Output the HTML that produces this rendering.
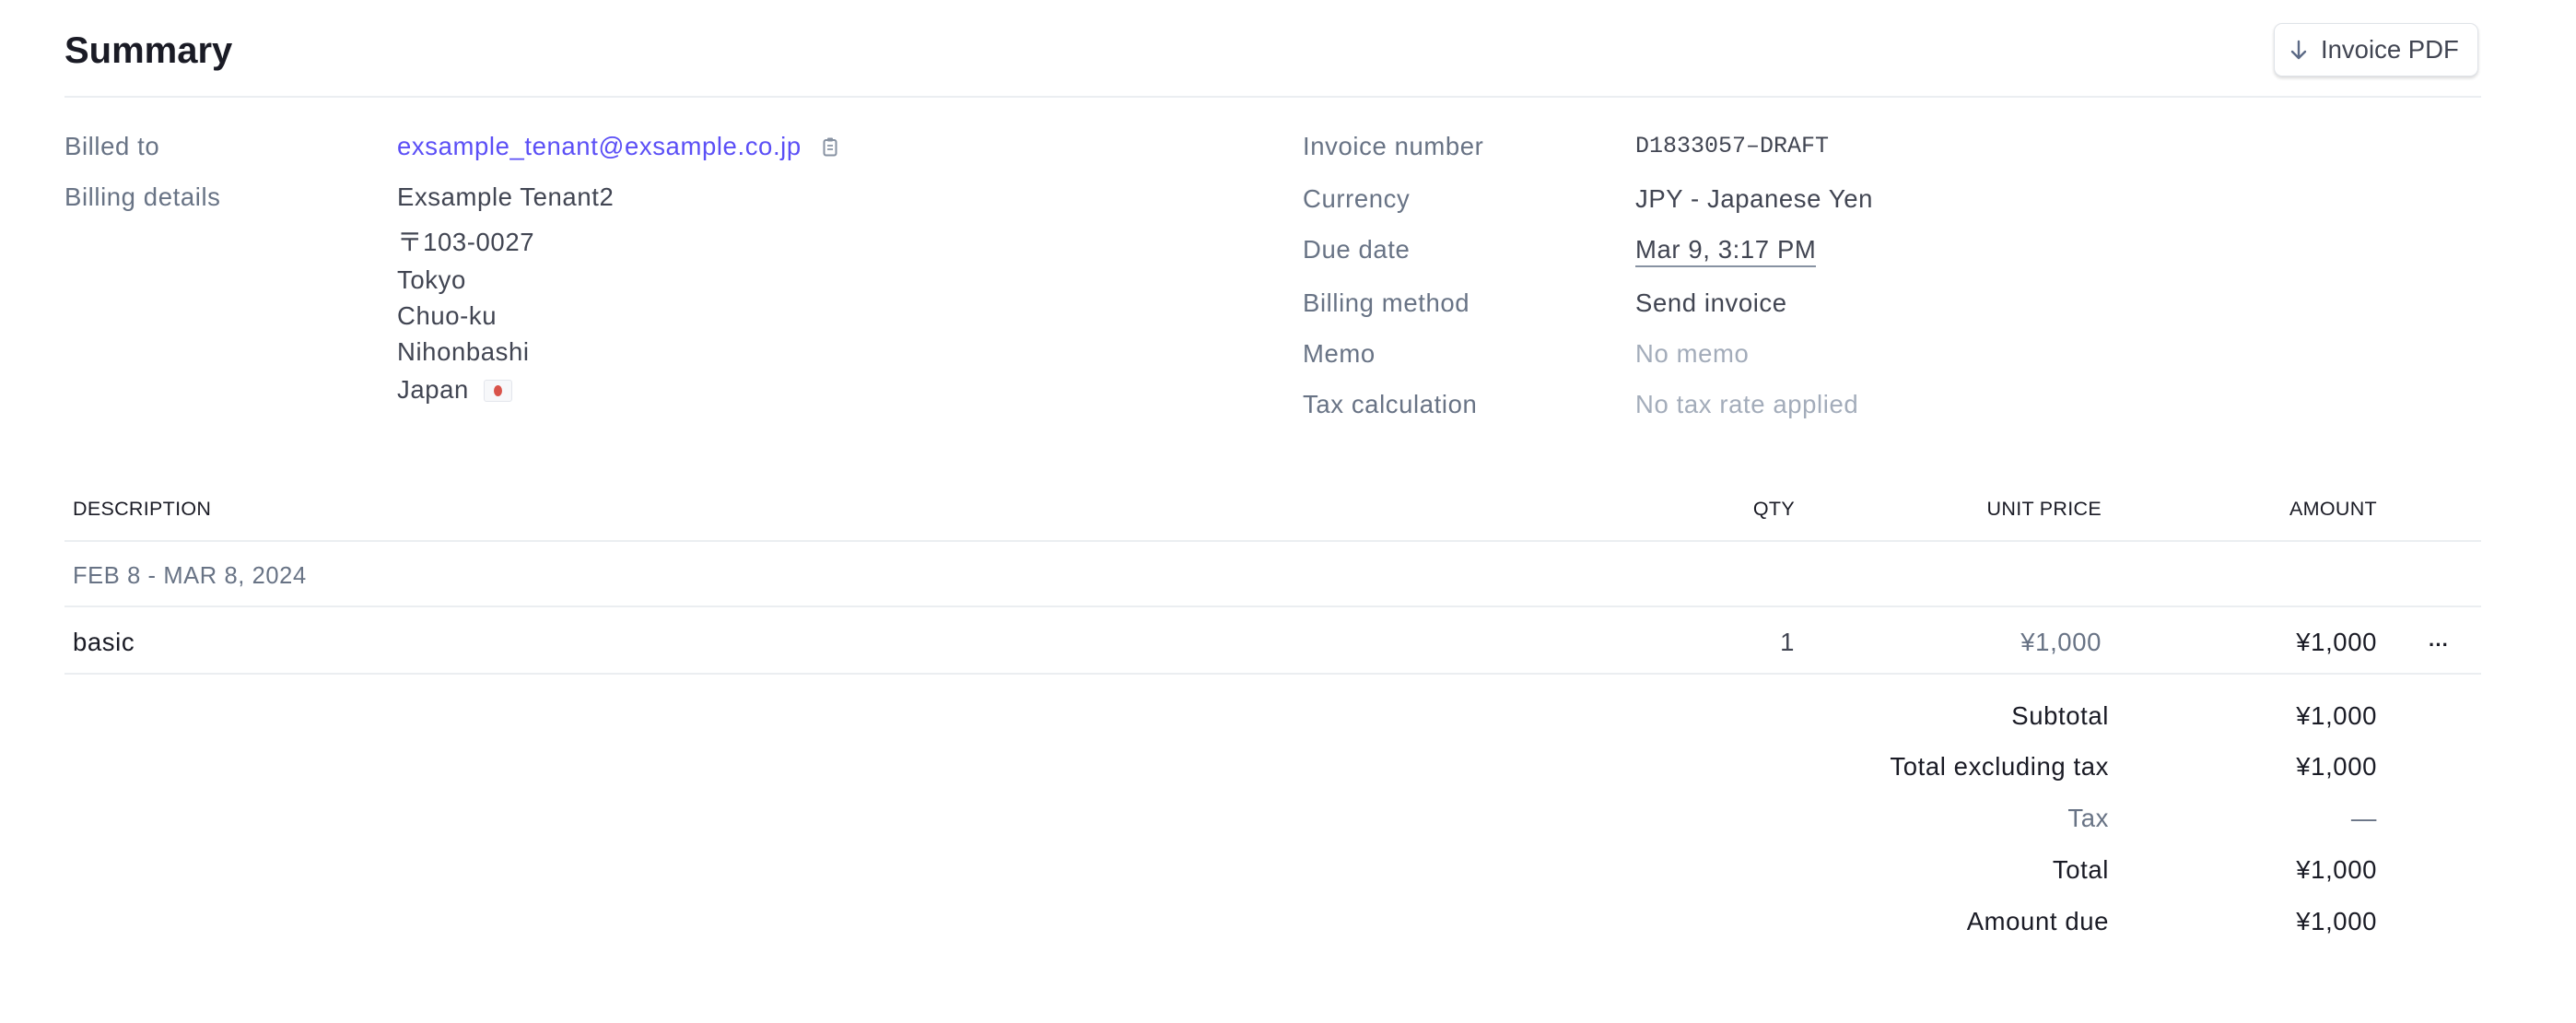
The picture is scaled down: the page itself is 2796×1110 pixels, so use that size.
<!DOCTYPE html>
<html><head><meta charset="utf-8"><style>
html,body{margin:0;padding:0;background:#fff;}
body{width:2796px;height:1110px;position:relative;overflow:hidden;font-family:"Liberation Sans","Noto Sans CJK JP",sans-serif;font-size:27.5px;letter-spacing:0.6px;color:#414552;}
.t{position:absolute;height:40px;line-height:40px;white-space:nowrap;}
.r{text-align:right;}
.lbl{color:#687385;}
.mut{color:#a3acba;}
.dk{color:#1a1b25;}
.hr{position:absolute;left:70px;width:2623px;height:2px;background:#ebeef1;}
.th{font-size:21.5px;color:#1a1b25;letter-spacing:0.3px;}
</style></head><body>
<div class="t dk" style="left:70px;top:35px;font-size:40px;font-weight:bold;letter-spacing:0;">Summary</div>
<div style="position:absolute;left:2468px;top:25px;width:220px;height:56px;border:1px solid #dfe3e8;border-radius:9px;box-shadow:0 2px 3px rgba(0,0,0,0.15);background:#fff;"></div>
<svg style="position:absolute;left:2484px;top:42px" width="22" height="24" viewBox="0 0 22 24"><path d="M11 3V21M4 14L11 21L18 14" stroke="#5c6a86" stroke-width="2.4" fill="none" stroke-linecap="round" stroke-linejoin="round"/></svg>
<div class="t" style="left:2519px;top:34px;font-size:27.5px;letter-spacing:0;color:#414552;">Invoice PDF</div>
<div class="hr" style="top:104px;"></div>

<div class="t lbl" style="left:70px;top:139px;">Billed to</div>
<div class="t" style="left:431px;top:139px;color:#5b4ff6;">exsample_tenant@exsample.co.jp</div>
<svg style="position:absolute;left:893px;top:148px" width="16" height="22" viewBox="0 0 16 22"><rect x="1.5" y="4" width="13" height="16.5" rx="2" stroke="#8792a2" stroke-width="2" fill="none"/><rect x="5" y="1.5" width="6" height="4" rx="1" fill="#8792a2"/><path d="M5 10h6M5 14h6" stroke="#8792a2" stroke-width="1.8"/></svg>
<div class="t lbl" style="left:70px;top:194px;">Billing details</div>
<div class="t" style="left:431px;top:194px;">Exsample Tenant2</div>
<div class="t" style="left:431px;top:243px;">〒103-0027</div>
<div class="t" style="left:431px;top:284px;">Tokyo</div>
<div class="t" style="left:431px;top:323px;">Chuo-ku</div>
<div class="t" style="left:431px;top:362px;">Nihonbashi</div>
<div class="t" style="left:431px;top:403px;">Japan</div>
<div style="position:absolute;left:525px;top:412px;width:29px;height:22px;border:1px solid #e3e6ec;border-radius:3px;background:#f7f8fa;"><div style="position:absolute;left:10px;top:5px;width:9px;height:12px;border-radius:50%;background:#d9534a;"></div></div>

<div class="t lbl" style="left:1414px;top:139px;">Invoice number</div>
<div class="t" style="left:1775px;top:139px;font-family:'Liberation Mono',monospace;font-size:25px;letter-spacing:0;">D1833057–DRAFT</div>
<div class="t lbl" style="left:1414px;top:196px;">Currency</div>
<div class="t" style="left:1775px;top:196px;">JPY - Japanese Yen</div>
<div class="t lbl" style="left:1414px;top:251px;">Due date</div>
<div class="t" style="left:1775px;top:251px;"><span style="border-bottom:2px solid #8792a2;padding-bottom:2px;">Mar 9, 3:17 PM</span></div>
<div class="t lbl" style="left:1414px;top:309px;">Billing method</div>
<div class="t" style="left:1775px;top:309px;">Send invoice</div>
<div class="t lbl" style="left:1414px;top:364px;">Memo</div>
<div class="t mut" style="left:1775px;top:364px;">No memo</div>
<div class="t lbl" style="left:1414px;top:419px;">Tax calculation</div>
<div class="t mut" style="left:1775px;top:419px;">No tax rate applied</div>

<div class="t th" style="left:79px;top:532px;">DESCRIPTION</div>
<div class="t th r" style="left:1848px;width:100px;top:532px;">QTY</div>
<div class="t th r" style="left:2081px;width:200px;top:532px;">UNIT PRICE</div>
<div class="t th r" style="left:2380px;width:200px;top:532px;">AMOUNT</div>
<div class="hr" style="top:586px;"></div>
<div class="t lbl" style="left:79px;top:605px;font-size:25.5px;">FEB 8 - MAR 8, 2024</div>
<div class="hr" style="top:657px;"></div>
<div class="t dk" style="left:79px;top:677px;">basic</div>
<div class="t r" style="left:1848px;width:100px;top:677px;">1</div>
<div class="t r lbl" style="left:2081px;width:200px;top:677px;">¥1,000</div>
<div class="t r dk" style="left:2380px;width:200px;top:677px;">¥1,000</div>
<div class="t dk" style="left:2636px;top:680px;font-size:22px;font-weight:bold;letter-spacing:0;">···</div>
<div class="hr" style="top:730px;"></div>

<div class="t r dk" style="left:1889px;width:400px;top:757px;">Subtotal</div>
<div class="t r dk" style="left:2380px;width:200px;top:757px;">¥1,000</div>
<div class="t r dk" style="left:1889px;width:400px;top:812px;">Total excluding tax</div>
<div class="t r dk" style="left:2380px;width:200px;top:812px;">¥1,000</div>
<div class="t r lbl" style="left:1889px;width:400px;top:868px;">Tax</div>
<div class="t r lbl" style="left:2380px;width:200px;top:868px;">—</div>
<div class="t r dk" style="left:1889px;width:400px;top:924px;">Total</div>
<div class="t r dk" style="left:2380px;width:200px;top:924px;">¥1,000</div>
<div class="t r dk" style="left:1889px;width:400px;top:980px;">Amount due</div>
<div class="t r dk" style="left:2380px;width:200px;top:980px;">¥1,000</div>
</body></html>
